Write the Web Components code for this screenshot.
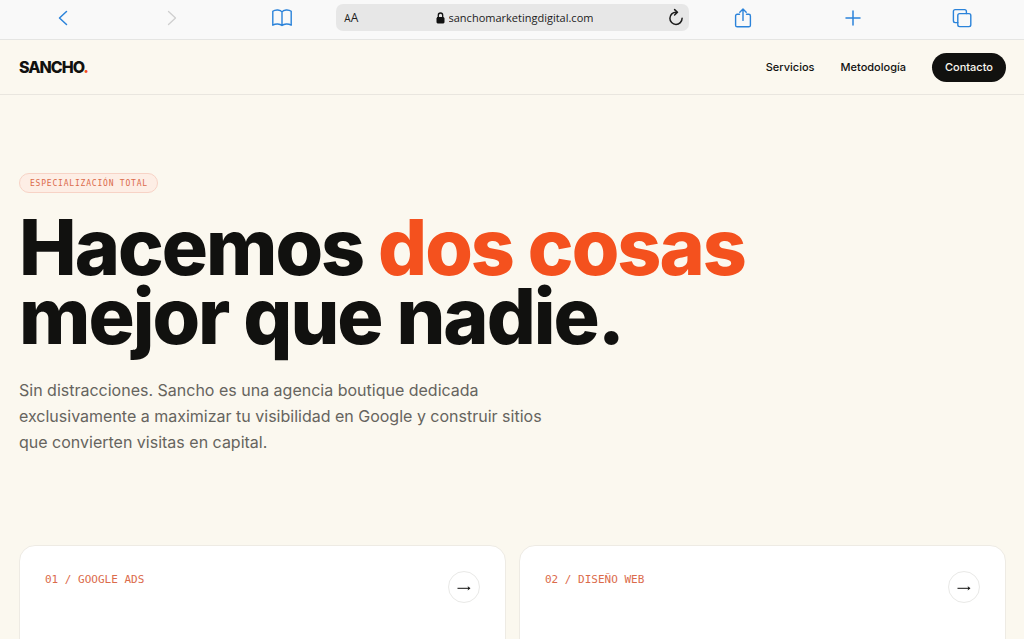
<!DOCTYPE html>
<html lang="es">
<head>
<meta charset="utf-8">
<meta name="viewport" content="width=device-width, initial-scale=1">
<title>Sancho Marketing Digital</title>
<style>
  html { background: #fbf8ef; }
  body { margin: 0; font-family: Inter, "Liberation Sans", sans-serif; color: #11110f; overflow-x: hidden; }
</style>
</head>
<body>
<browser-bar></browser-bar>
<site-header></site-header>
<main>
  <hero-section>
    <span slot="tag">ESPECIALIZACIÓN TOTAL</span>
    <span slot="lead">Hacemos</span>
    <span slot="accent">dos cosas</span>
    <span slot="rest">mejor que nadie.</span>
    <span slot="copy">Sin distracciones. Sancho es una agencia boutique dedicada exclusivamente a maximizar tu visibilidad en Google y construir sitios que convierten visitas en capital.</span>
  </hero-section>
  <service-grid>
    <service-card label="Google Ads">01 / GOOGLE ADS</service-card>
    <service-card label="Diseño web">02 / DISEÑO WEB</service-card>
  </service-grid>
</main>

<script>
const define = (name, html) => customElements.define(name, class extends HTMLElement {
  constructor() {
    super();
    this.attachShadow({ mode: "open" }).innerHTML = html;
  }
  connectedCallback() {
    const link = this.shadowRoot.querySelector("a[data-go]");
    if (link) link.setAttribute("aria-label", this.getAttribute("label"));
  }
});

define("browser-bar", `
<style>
  :host { display: block; background: #f9f9f9; border-bottom: 1px solid #e5e5e3; }
  .bar { display: grid; grid-template-columns: 100fr 100fr 100fr 322fr 100fr 100fr 100fr; align-items: center; padding: 4px 7px 8px 8px; }
  button { all: unset; display: flex; justify-content: center; color: #2b83da; cursor: pointer; }
  button:disabled { color: #cfcfcf; }
  svg { display: block; fill: none; stroke: currentColor; stroke-linecap: round; stroke-linejoin: round; }
  .field { display: grid; grid-template-columns: 30px 1fr 26px; align-items: center; height: 27px; background: #e7e7e7; border-radius: 7px; color: #1c1c1c; font-family: "Open Sans", "Noto Sans", sans-serif; }
  .field button { color: #1c1c1c; }
  .aa { align-items: baseline; font-size: 12px; }
  .aa small { font-size: 10px; }
  label { display: flex; justify-content: center; align-items: center; gap: 4px; }
  input { all: unset; field-sizing: content; font-size: 11px; line-height: 20px; }
</style>
<div class="bar">
  <button aria-label="Atrás"><svg width="22" height="22" viewBox="0 0 22 22" stroke-width="1.5"><path d="M14.5 4.5 7.5 11l7 6.5"/></svg></button>
  <button aria-label="Adelante" disabled><svg width="22" height="22" viewBox="0 0 22 22" stroke-width="1.3"><path d="M7.5 4.5 14.5 11l-7 6.5"/></svg></button>
  <button aria-label="Marcadores"><svg width="22" height="22" viewBox="0 0 22 22" stroke-width="1.4"><path d="M11 5C9.6 2.6 4.4 2.2 1.8 4.3V18.2C4.6 16.4 9 16.6 11 18.6 13 16.6 17.4 16.4 20.2 18.2V4.3C17.6 2.2 12.4 2.6 11 5ZM11 5V18.6"/></svg></button>
  <div class="field">
    <button class="aa" aria-label="Tamaño del texto"><small>A</small>A</button>
    <label>
      <svg width="9" height="12" viewBox="0 0 9 12"><rect x="1" y="5.5" width="7" height="5.5" rx=".6" fill="#111" stroke="#111"/><path d="M2.3 5V3.2a2.2 2.2 0 0 1 4.4 0V5" stroke="#111" stroke-width="1.3"/></svg>
      <input type="text" aria-label="Dirección" value="sanchomarketingdigital.com">
    </label>
    <button aria-label="Recargar"><svg width="18" height="20" viewBox="0 0 18 20" stroke-width="1.5"><path d="M9.2 4.2A6.1 6.1 0 1 0 15.1 10.3M7.6 1.6l2.9 2.7-2.9 2.7"/></svg></button>
  </div>
  <button aria-label="Compartir"><svg width="22" height="22" viewBox="0 0 22 22" stroke-width="1.4"><path d="M7.5 7.3H5.2a1.6 1.6 0 0 0-1.6 1.6v9.3a1.6 1.6 0 0 0 1.6 1.6h11.6a1.6 1.6 0 0 0 1.6-1.6V8.9a1.6 1.6 0 0 0-1.6-1.6h-2.3M11 13.4V2.2M7.8 5.2 11 2l3.2 3.2"/></svg></button>
  <button aria-label="Pestaña nueva"><svg width="22" height="22" viewBox="0 0 22 22" stroke-width="1.5"><path d="M4 11h14M11 4v14"/></svg></button>
  <button aria-label="Pestañas"><svg width="22" height="22" viewBox="0 0 22 22" stroke-width="1.4"><rect x="6.8" y="6.6" width="13" height="13" rx="1.8"/><path d="M6.8 15.6H4.2a1.8 1.8 0 0 1-1.8-1.8V4.4a1.8 1.8 0 0 1 1.8-1.8h9.4a1.8 1.8 0 0 1 1.8 1.8v2.2"/></svg></button>
</div>`);

define("site-header", `
<style>
  :host { display: block; border-bottom: 1px solid #e9e6df; }
  header { display: flex; justify-content: space-between; align-items: center; padding: 13px 18px 12px 19px; }
  a { color: inherit; text-decoration: none; }
  .logo { font-size: 16px; font-weight: 800; letter-spacing: -1px; line-height: 19px; }
  .logo span { color: #f4511e; }
  nav { display: flex; align-items: center; gap: 26px; font-size: 11px; font-weight: 500; line-height: 15px; }
  .cta { background: #11110f; color: #fbf8ef; border-radius: 15px; padding: 7px 13px; }
</style>
<header>
  <a class="logo" href="#">SANCHO<span>.</span></a>
  <nav><a href="#servicios">Servicios</a><a href="#metodologia">Metodología</a><a class="cta" href="#contacto">Contacto</a></nav>
</header>`);

define("hero-section", `
<style>
  :host { display: block; padding: 78px 19px 90px; }
  .tag { display: inline-block; font: 8px/17px "DejaVu Sans Mono", monospace; letter-spacing: 0.1em; color: #db6b4b; background: #fdeee5; border: 1px solid #f7d3c6; border-radius: 10px; padding: 1px 9px 0 10px; vertical-align: top; }
  h1 { margin: 20px 0 0; font-size: 77px; line-height: 69px; font-weight: 800; letter-spacing: -2px; }
  em { font-style: normal; color: #f4511e; }
  p { margin: 26px 0 0; max-width: 540px; font-size: 16px; line-height: 26px; color: #66645e; }
</style>
<div class="tag"><slot name="tag"></slot></div>
<h1><slot name="lead"></slot> <em><slot name="accent"></slot></em><br><slot name="rest"></slot></h1>
<p><slot name="copy"></slot></p>`);

define("service-grid", `
<style>
  :host { display: grid; grid-template-columns: 1fr 1fr; gap: 13px; padding: 0 18px 0 19px; height: 94px; overflow: hidden; }
</style>
<slot></slot>`);

define("service-card", `
<style>
  :host { display: flex; justify-content: space-between; align-items: flex-start; box-sizing: border-box; min-height: 320px; padding: 25px; background: #fff; border: 1px solid #eeebe4; border-radius: 16px; }
  h2 { margin: 0; font: 11px/18px "DejaVu Sans Mono", monospace; color: #db6b4b; }
  a { display: flex; justify-content: center; align-items: center; box-sizing: border-box; width: 32px; height: 32px; border: 1px solid #e9e9e7; border-radius: 50%; color: #11110f; }
  svg { display: block; }
</style>
<h2><slot></slot></h2>
<a data-go href="#detalle"><svg width="16" height="16" viewBox="0 0 16 16" fill="none" stroke="currentColor" stroke-width="1"><path d="M1.5 9.3h12"/><path d="M11.8 7.4 14.3 9.3 11.8 11.2 12.4 9.3Z" fill="currentColor" stroke-width=".2"/></svg></a>`);
</script>
</body>
</html>
